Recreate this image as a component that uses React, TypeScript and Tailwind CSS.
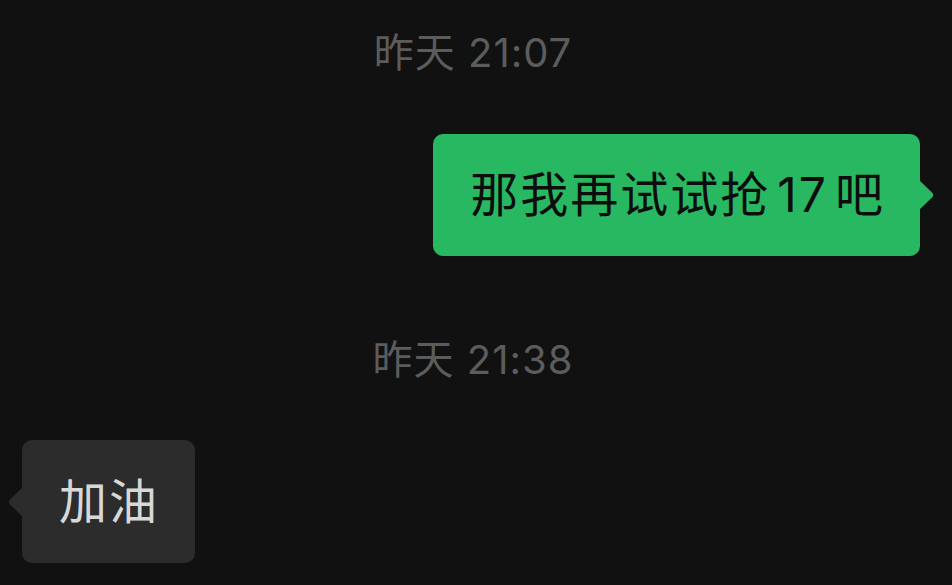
import React from 'react';

const font = { fontFamily: "Inter, 'Noto Sans CJK SC', sans-serif" };

const Time: React.FC<{ text: string }> = ({ text }) => (
  <div className="flex h-[44px] items-center justify-center pr-[6px] text-[40px] leading-[44px] tracking-[1px] text-[#5c5c5c]">
    {text}
  </div>
);

export default function App() {
  return (
    <div className="flex h-[585px] w-[952px] flex-col overflow-hidden bg-[#111111] pt-[31px]" style={font}>
      <Time text="昨天 21:07" />

      {/* outgoing */}
      <div className="mt-[59px] flex justify-end pr-[32px]">
        <div className="relative flex h-[122px] items-center rounded-[10px] bg-[#29b862] pl-[37px] pr-[35px] text-[48px] tracking-[2px] text-[#0d0d0d]">
          那我再试试抢<span className="px-[7px]">17</span>吧
          <svg className="absolute right-[-15px] top-[46px]" width="16" height="30" viewBox="0 0 16 30">
            <path d="M0 0 L13 12.5 Q15.5 15 13 17.5 L0 30 Z" fill="#29b862" />
          </svg>
        </div>
      </div>

      <div className="mt-[82px]">
        <Time text="昨天 21:38" />
      </div>

      {/* incoming */}
      <div className="mt-[58px] flex justify-start pl-[22px]">
        <div className="relative flex h-[123px] items-center rounded-[10px] bg-[#2c2c2c] pl-[37px] pr-[36px] text-[48px] tracking-[2px] text-[#d8d8d8]">
          加油
          <svg className="absolute left-[-15px] top-[47px]" width="16" height="30" viewBox="0 0 16 30">
            <path d="M16 0 L3 12.5 Q0.5 15 3 17.5 L16 30 Z" fill="#2c2c2c" />
          </svg>
        </div>
      </div>
    </div>
  );
}
